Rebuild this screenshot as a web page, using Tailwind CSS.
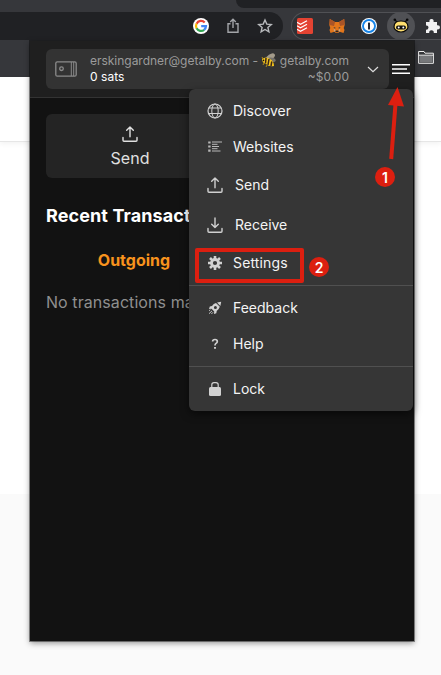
<!DOCTYPE html>
<html lang="en"><head><meta charset="utf-8"><title>Alby wallet</title>
<script src="https://cdn.jsdelivr.net/npm/@tailwindcss/browser@4"></script></head>
<body class="relative h-[675px] w-[441px] overflow-hidden bg-white font-['Inter',sans-serif]">
<svg class="hidden"><defs>
<g id="up" fill="none" stroke="currentColor" stroke-width="1.4" stroke-linecap="round" stroke-linejoin="round"><path d="M1 11.5V14.2Q1 15.2 2 15.2H14Q15 15.2 15 14.2V11.5M8 10.7V1M4.7 4.2L8 .9L11.3 4.2"/></g>
<g id="down" fill="none" stroke="currentColor" stroke-width="1.4" stroke-linecap="round" stroke-linejoin="round"><path d="M1 11.5V14.2Q1 15.2 2 15.2H14Q15 15.2 15 14.2V11.5M8 .9V10.5M4.7 7.3L8 10.6L11.3 7.3"/></g>
</defs></svg>
<!-- Browser chrome -->
<header class="flex h-[77px] flex-col bg-[#36373b]">
  <div class="flex h-3 justify-end"><div class="h-2 w-[205px] rounded-bl-lg bg-[#202124]"></div></div>
  <div class="flex h-7">
    <div class="flex w-[283px] items-center justify-end gap-4 rounded-r-full bg-[#202124] pr-[10px]">
      <svg class="size-4" viewBox="0 0 16 16"><circle cx="8" cy="8" r="8" fill="#fff"/><g fill="none" stroke-width="2.2"><path d="M11.7 4.4A5 5 0 0 0 3.6 5.7" stroke="#ea4335"/><path d="M3.6 5.6A5 5 0 0 0 3.6 10.4" stroke="#fbbc05"/><path d="M3.6 10.3A5 5 0 0 0 11.2 11.8" stroke="#34a853"/><path d="M11.1 11.8A5 5 0 0 0 13 8.1H8.2" stroke="#4285f4"/></g></svg>
      <svg class="size-4" viewBox="0 0 16 16" fill="none" stroke="#a3a5a9" stroke-width="1.4"><path d="M5.5 5.7H3V14.3H13V5.7H10.5M8 10V1.3M5.2 4L8 1.3L10.8 4"/></svg>
      <svg class="size-4" viewBox="0 0 16 16" fill="none" stroke="#b8babd" stroke-width="1.4"><path d="M8 2L9.8 6.1L14.3 6.5L10.9 9.4L11.9 13.8L8 11.5L4.1 13.8L5.1 9.4L1.7 6.5L6.2 6.1Z"/></svg>
    </div>
    <div class="ml-2 flex w-[150px] shrink-0 items-center rounded-l-full border border-r-0 border-[#505155] bg-[#303135] pl-[5px]">
      <svg class="size-4 shrink-0" viewBox="0 0 16 16"><rect width="16" height="16" rx="1.5" fill="#e44332"/><g fill="none" stroke="#fff" stroke-width="1.2"><path d="M0 4.4L3.5 6.2L10 2.7M0 7.9L3.5 9.7L10 6.2M0 11.4L3.5 13.2L10 9.7"/></g></svg>
      <svg class="ml-4 size-4 shrink-0" viewBox="0 0 16 16"><path d="M.8 1L6 4H10L15.2 1L15.7 7L14.7 10L15.5 12L14.5 15L10.5 13.8L9.5 15H6.5L5.5 13.8L1.5 15L.5 12L1.3 10L.3 7Z" fill="#e2761b"/><path d="M.8 1L6 4L5 8L.5 7ZM15.2 1L10 4L11 8L15.5 7Z" fill="#a95427"/><path d="M4.3 9L6.6 9.8L6 10.8ZM11.7 9L9.4 9.8L10 10.8Z" fill="#233447"/><path d="M6.5 12.4H9.5L9.7 14.2H6.3Z" fill="#30251f"/><path d="M5.5 11L6.5 12.4L6 14L4.5 12ZM10.5 11L9.5 12.4L10 14L11.5 12Z" fill="#c6aa91"/></svg>
      <svg class="ml-4 size-4 shrink-0" viewBox="0 0 16 16"><circle cx="8" cy="8" r="8" fill="#fff"/><circle cx="8" cy="8" r="6" fill="#fff" stroke="#1684e8" stroke-width="1.9"/><rect x="7" y="4.5" width="2" height="7" rx=".5" fill="#252a35"/></svg>
      <div class="ml-[10px] flex size-7 shrink-0 items-center justify-center rounded-full bg-[#505155]">
        <svg class="size-4" viewBox="0 0 16 16"><path d="M2 2L5 5M14 2L11 5" stroke="#090909" stroke-width="1.2"/><circle cx="1.8" cy="1.8" r="1.3" fill="#080808"/><circle cx="14.2" cy="1.8" r="1.3" fill="#080808"/><path d="M1 9Q1 3 8 3T15 9Q15 11 13 12.2Q11 14 8 14T3 12.2Q1 11 1 9Z" fill="#ffdf6f" stroke="#090909" stroke-width="1.2"/><rect x="3" y="7.5" width="10" height="4" rx="2" fill="#111"/><circle cx="5.7" cy="9.5" r="1" fill="#fff"/><circle cx="10.3" cy="9.5" r="1" fill="#fff"/></svg>
      </div>
      <svg class="ml-[10px] size-4 shrink-0" viewBox="0 0 16 16" fill="#f1f1f2"><path d="M1 4H4.5Q4 1.1 6.5 1T8.6 4H12V7.2Q15 6.8 15 9.3T12 11.5V15H8.8Q9 12.4 6.5 12.3T4.2 15H1V11.7Q3.4 11.8 3.5 9.5T1 7.4Z"/></svg>
    </div>
  </div>
  <div class="flex justify-end pt-[10px] pr-[7px]"><svg class="h-[14px] w-4" viewBox="0 0 16 14"><path d="M.6 1.5H6L7 3.2H15.4V13.3H.6Z" fill="#353639" stroke="#eee"/><path d="M1.5 5.7H14.5V12.5H1.5Z" fill="#77787b"/><path d="M.6 5.2H15.4" stroke="#eee"/></svg></div>
</header>
<div class="h-[65px] border-b border-[#e6e6e6] bg-white shadow-[0_2px_5px_#0000000d]"></div>
<div class="mt-[352px] h-[181px] bg-[#fafafa]"></div>

<!-- Extension popup -->
<main class="absolute top-[41px] left-[30px] h-[600px] w-[384px] bg-[#121212] shadow-[0_0_0_1px_#00000066,0_2px_6px_#00000070]">
  <div class="flex h-[57px] items-start border-b border-[#333] bg-[#1f1f1f] pt-2 pl-4">
    <div class="flex h-10 w-[343px] items-center rounded-md bg-[#333] pl-[9px]">
      <svg class="h-4 w-[22px] shrink-0" viewBox="0 0 22 16" fill="none" stroke="#8b8b8b" stroke-width="1.3"><rect x=".8" y=".8" width="20.4" height="14.4" rx="1.5"/><path d="M16.3 1V15M18.7 1V15" stroke-width="1"/><circle cx="6.5" cy="7.7" r="1.8"/></svg>
      <div class="ml-[13px] w-[259px] text-[12px] leading-4 whitespace-nowrap text-[#9b9b9b]">
        <div class="flex justify-between tracking-[-.02px]"><span>erskingardner@getalby.com -</span><svg class="h-[15px] w-[15px] shrink-0" viewBox="0 0 15 15"><ellipse cx="9.5" cy="4" rx="5" ry="2.7" transform="rotate(-35 9.5 4)" fill="#a49b8a"/><ellipse cx="11" cy="6.8" rx="3.8" ry="2" transform="rotate(15 11 6.8)" fill="#77736b"/><path d="M1 6Q5 3 9 6Q13 8 13 13Q8 14 5 11Q1 10 1 6Z" fill="#f5c51d"/><path d="M5 5L4.5 10.5M8 6L7 12M10.8 8.5L10 13" stroke="#392719" stroke-width="1.5"/><path d="M2 6L1 4M3 10L2 12M6 12L5 14" stroke="#b28c17"/><circle cx="2.5" cy="7.4" r=".8" fill="#111"/></svg><span>getalby.com</span></div>
        <div class="flex justify-between"><span class="tracking-[.05px] text-white">0 sats</span><span>~$0.00</span></div>
      </div>
      <svg class="ml-[18px] h-3 w-3" viewBox="0 0 12 12" fill="none" stroke="#dedede" stroke-width="1.2"><path d="M1 4L6 8.7L11 4"/></svg>
    </div>
    <svg class="mt-[14px] ml-[3px] h-3 w-[18px]" viewBox="0 0 18 12" fill="none" stroke="#fff" stroke-width="1.4"><path d="M0 1.7H18M0 6H15M0 10.3H18"/></svg>
  </div>
  <div class="px-4 pt-4">
    <div class="flex h-16 w-[168px] flex-col items-center rounded-md bg-[#242424] pt-3 text-[#e0e0e0]"><svg class="size-4" viewBox="0 0 16 16"><use href="#up"/></svg><span class="mt-1 text-[16px] leading-6">Send</span></div>
    <h1 class="mt-6 text-[18px] leading-7 font-bold tracking-[.1px] text-white">Recent Transactions</h1>
    <div class="mt-[18px] w-44 text-center text-[16px] leading-6 font-bold text-[#f8931d]">Outgoing</div>
    <p class="mt-[18px] text-[16px] leading-6 tracking-[.07px] whitespace-nowrap text-[#8f8f8f]">No transactions made</p>
  </div>
</main>

<!-- Dropdown -->
<nav class="absolute top-[89px] left-[189px] flex h-[322px] w-[224px] flex-col rounded-md bg-[#363636] text-[14px] text-[#f4f4f4] shadow-[0_3px_8px_#0008]">
  <div class="h-[196px] py-1">
    <div class="flex h-9 items-center pl-[18px]"><svg class="mr-[10px] size-4 text-[#d2d2d2]" viewBox="0 0 16 16" fill="none" stroke="currentColor"><circle cx="8" cy="8" r="7" stroke-width="1.2"/><ellipse cx="8" cy="8" rx="3.2" ry="7"/><path d="M1.8 5H14.2M1.8 10.5H14.2"/></svg><span class="-mt-0.5">Discover</span></div>
    <div class="flex h-9 items-center pl-[18px]"><svg class="mr-[10px] size-4 text-[#b8b8b8]" viewBox="0 0 16 16" fill="none" stroke="currentColor"><path d="M5 3H15M5 5.3H10.5M5 7.5H12M5 9.7H10.5M5 12H13.5" stroke-width="1"/><path d="M1.2 3.5H3.6M1.2 7.5H3.6M1.2 11.7H3.6" stroke-width="2.2"/></svg><span class="-mt-0.5">Websites</span></div>
    <div class="flex h-10 items-center pl-[18px]"><svg class="mr-3 size-4 text-[#d0d0d0]" viewBox="0 0 16 16"><use href="#up"/></svg><span class="-mt-0.5">Send</span></div>
    <div class="flex h-10 items-center pl-[18px]"><svg class="mr-3 size-4 text-[#d0d0d0]" viewBox="0 0 16 16"><use href="#down"/></svg><span class="-mt-0.5">Receive</span></div>
    <div class="flex h-9 items-center pl-[18px]"><svg class="mr-[10px] size-4 text-[#d2d2d2]" viewBox="0 0 16 16" fill="none" stroke="currentColor"><circle cx="8" cy="8" r="3.5" stroke-width="2.8"/><path d="M8 1V4M8 12V15M1 8H4M12 8H15M3 3L5.2 5.2M10.8 10.8L13 13M13 3L10.8 5.2M5.2 10.8L3 13" stroke-width="2.6"/></svg><span class="-mt-0.5 tracking-[.15px]">Settings</span></div>
  </div>
  <div class="h-[81px] border-t border-[#505050] py-1">
    <div class="flex h-9 items-center pl-[18px]"><svg class="mr-[10px] size-4 text-[#d2d2d2]" viewBox="0 0 16 16" fill="currentColor"><path d="M10 2.4L14.2 1.7L13.4 6Z"/><path fill-rule="evenodd" d="M9 3L12.8 6.8Q12 9.5 9.7 11L9.3 13.2L7 14L7.2 11.4L4.5 8.7L2 8.9L2.8 6.4L5 6.1Q6.5 3.7 9 3ZM8.4 6A1.5 1.5 0 1 0 8.4 9A1.5 1.5 0 1 0 8.4 6Z"/><path d="M2 10.8L3.3 9.7M2 13.7L5 10.9M4.4 14L6 12.3" fill="none" stroke="currentColor" stroke-width=".9"/></svg><span class="-mt-0.5">Feedback</span></div>
    <div class="flex h-9 items-center pl-[18px]"><svg class="mr-[10px] size-4 text-[#d2d2d2]" viewBox="0 0 16 16" fill="none" stroke="currentColor" stroke-width="1.7"><path d="M5.6 5.5Q5.7 3.5 8 3.5Q10.3 3.5 10.3 5.4Q10.3 6.6 9 7.4Q8 8 8 9.6"/><path d="M8 11V12.8" stroke-width="1.9"/></svg><span class="-mt-0.5">Help</span></div>
  </div>
  <div class="border-t border-[#505050] py-1">
    <div class="flex h-9 items-center pl-[18px]"><svg class="mr-[10px] size-4 text-[#d2d2d2]" viewBox="0 0 16 16"><path d="M4.8 7V3.8Q4.8 1.7 7 1.7H9Q11.2 1.7 11.2 3.8V7" fill="none" stroke="currentColor" stroke-width="1.2"/><rect x="2" y="6" width="12" height="9" rx="1.5" fill="currentColor"/></svg><span class="-mt-0.5">Lock</span></div>
  </div>
</nav>

<!-- Step annotations -->
<div class="absolute top-[248px] left-[195px] h-[35px] w-[109px] rounded-[2px] border-4 border-[#dc1f10]"></div>
<div class="absolute top-[257px] left-[309px] flex size-5 items-center justify-center rounded-full bg-[#dc1f10] text-[14px] font-semibold text-white">2</div>
<svg class="absolute top-[86px] left-[386px] h-[75px] w-5" viewBox="0 0 20 75"><path d="M11.5 1L18 20.5L2 19Z" fill="#dc1f10"/><path d="M9.5 18L5.2 73" stroke="#dc1f10" stroke-width="4"/></svg>
<div class="absolute top-[167px] left-[375px] flex size-5 items-center justify-center rounded-full bg-[#dc1f10] text-[14px] font-semibold text-white">1</div>
</body></html>
